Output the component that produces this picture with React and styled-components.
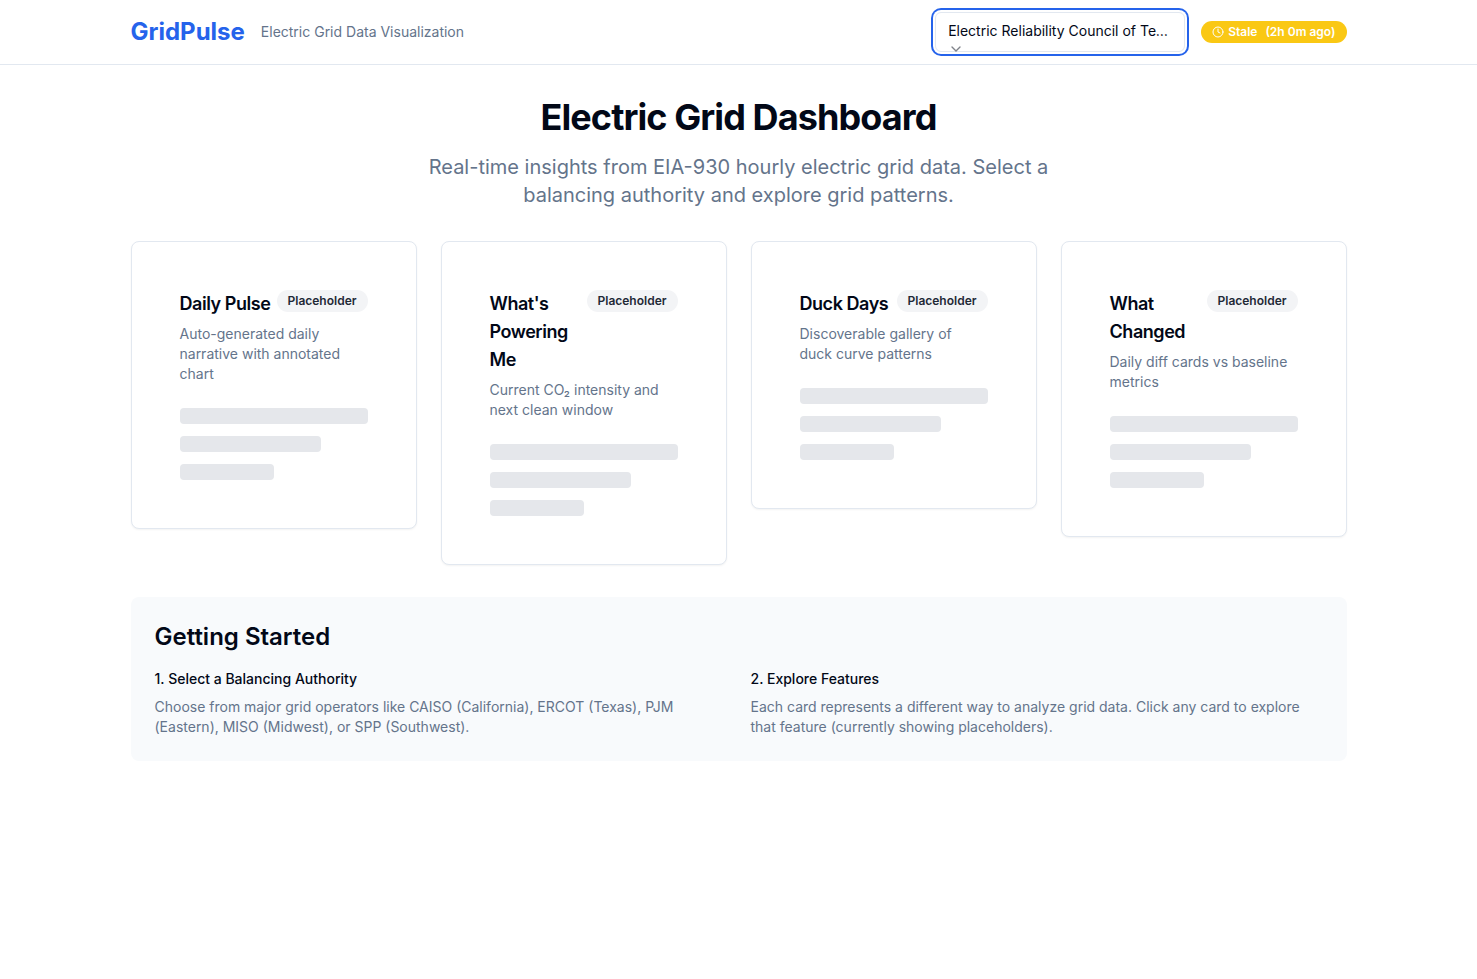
import React, { useState } from "react";
import styled, { createGlobalStyle } from "styled-components";
import { ChevronDown, Clock } from "lucide-react";

const GlobalStyle = createGlobalStyle`
  *, *::before, *::after { box-sizing: border-box; }
  body {
    margin: 0;
    background: #ffffff;
    color: #020817;
    font-family: Inter, "Liberation Sans", sans-serif;
    font-size: 14px;
    line-height: 20px;
  }
  h1, h2, h3, p { margin: 0; }
`;

const Container = styled.div`
  width: 100%;
  max-width: 1280px;
  margin: 0 auto;
  padding: 0 32px;
`;

const Header = styled.header`
  border-bottom: 1px solid #e2e8f0;
`;

const HeaderBar = styled(Container)`
  display: flex;
  align-items: center;
  justify-content: space-between;
  min-height: 64px;
`;

const HeaderGroup = styled.div`
  display: flex;
  align-items: center;
  gap: 16px;
`;

const Brand = styled.a`
  color: #2563eb;
  font-size: 24px;
  line-height: 32px;
  font-weight: 700;
  text-decoration: none;
`;

const Muted = styled.p`
  color: #64748b;
`;

const SelectWrap = styled.div`
  position: relative;
  display: flex;
`;

const Select = styled.select`
  appearance: none;
  width: 250px;
  height: 40px;
  padding: 0 12px 2px;
  border: 1px solid #e2e8f0;
  border-radius: 6px;
  outline: none;
  background: #ffffff;
  box-shadow: 0 0 0 2px #ffffff, 0 0 0 4px #2563eb;
  color: #020817;
  font: inherit;
  white-space: nowrap;
  overflow: hidden;
  text-overflow: ellipsis;
`;

const SelectChevron = styled(ChevronDown)`
  position: absolute;
  left: 13px;
  bottom: -5px;
  opacity: 0.5;
  pointer-events: none;
`;

const Pill = styled.span`
  display: inline-flex;
  flex-shrink: 0;
  align-items: center;
  gap: 4px;
  padding: 3px 11px;
  border-radius: 11px;
  background: ${(p) => (p.$tone === "warning" ? "#fac814" : "#f3f4f6")};
  color: ${(p) => (p.$tone === "warning" ? "#ffffff" : "#1f2937")};
  font-size: 12px;
  line-height: 16px;
  font-weight: 600;
`;

const Age = styled.span`
  margin-left: 4px;
`;

const Main = styled.main`
  padding: 32px 0;
`;

const Content = styled(Container)`
  display: flex;
  flex-direction: column;
  gap: 32px;
`;

const Intro = styled.section`
  display: flex;
  flex-direction: column;
  align-items: center;
  gap: 16px;
  text-align: center;
`;

const PageTitle = styled.h1`
  font-size: 36px;
  line-height: 40px;
  font-weight: 700;
  letter-spacing: -0.025em;
`;

const Lead = styled(Muted)`
  max-width: 672px;
  font-size: 20px;
  line-height: 28px;
`;

const CardGrid = styled.section`
  display: grid;
  grid-template-columns: repeat(4, minmax(0, 1fr));
  align-items: start;
  gap: 24px;

  @media (max-width: 1023px) {
    grid-template-columns: repeat(2, minmax(0, 1fr));
  }
`;

const Card = styled.article`
  padding: 48px;
  border: 1px solid #e2e8f0;
  border-radius: 8px;
  background: #ffffff;
  box-shadow: 0 1px 2px rgba(0, 0, 0, 0.05);
`;

const CardHead = styled.div`
  display: flex;
  align-items: flex-start;
  justify-content: space-between;
`;

const CardTitle = styled.h3`
  font-size: 18px;
  line-height: 28px;
  font-weight: 600;
  letter-spacing: -0.025em;
`;

const CardText = styled(Muted)`
  margin-top: 6px;
`;

const Skeleton = styled.div`
  display: flex;
  flex-direction: column;
  gap: 12px;
  margin-top: 24px;
`;

const SkeletonBar = styled.div`
  width: ${(p) => p.$width};
  height: 16px;
  border-radius: 4px;
  background: #e5e7eb;
`;

const Panel = styled.section`
  padding: 24px;
  border-radius: 8px;
  background: #f8fafc;
`;

const PanelTitle = styled.h2`
  margin-bottom: 16px;
  font-size: 24px;
  line-height: 32px;
  font-weight: 600;
`;

const Steps = styled.div`
  display: grid;
  grid-template-columns: repeat(2, minmax(0, 1fr));
  gap: 24px;
`;

const StepTitle = styled.h3`
  margin-bottom: 8px;
  font-size: 14px;
  line-height: 20px;
  font-weight: 500;
`;

const AUTHORITIES = [
  ["ERCO", "Electric Reliability Council of Texas, Inc."],
  ["CISO", "California Independent System Operator"],
  ["PJM", "PJM Interconnection, LLC"],
  ["MISO", "Midcontinent Independent System Operator, Inc."],
  ["SWPP", "Southwest Power Pool"],
];

const FEATURES = [
  ["Daily Pulse", "Auto-generated daily narrative with annotated chart"],
  ["What's Powering Me", "Current CO₂ intensity and next clean window"],
  ["Duck Days", "Discoverable gallery of duck curve patterns"],
  ["What Changed", "Daily diff cards vs baseline metrics"],
];

const STEPS = [
  [
    "1. Select a Balancing Authority",
    "Choose from major grid operators like CAISO (California), ERCOT (Texas), PJM (Eastern), MISO (Midwest), or SPP (Southwest).",
  ],
  [
    "2. Explore Features",
    "Each card represents a different way to analyze grid data. Click any card to explore that feature (currently showing placeholders).",
  ],
];

export default function App() {
  const [authority, setAuthority] = useState("ERCO");

  return (
    <>
      <GlobalStyle />
      <Header>
        <HeaderBar>
          <HeaderGroup>
            <Brand href="#">GridPulse</Brand>
            <Muted>Electric Grid Data Visualization</Muted>
          </HeaderGroup>
          <HeaderGroup>
            <SelectWrap>
              <Select
                aria-label="Balancing authority"
                value={authority}
                onChange={(e) => setAuthority(e.target.value)}
              >
                {AUTHORITIES.map(([code, name]) => (
                  <option key={code} value={code}>{name}</option>
                ))}
              </Select>
              <SelectChevron size={16} aria-hidden="true" />
            </SelectWrap>
            <Pill $tone="warning">
              <Clock size={12} aria-hidden="true" />
              <span>Stale</span>
              <Age>(2h 0m ago)</Age>
            </Pill>
          </HeaderGroup>
        </HeaderBar>
      </Header>
      <Main>
        <Content>
          <Intro>
            <PageTitle>Electric Grid Dashboard</PageTitle>
            <Lead>
              Real-time insights from EIA-930 hourly electric grid data. Select a
              balancing authority and explore grid patterns.
            </Lead>
          </Intro>
          <CardGrid>
            {FEATURES.map(([title, text]) => (
              <Card key={title}>
                <CardHead>
                  <CardTitle>{title}</CardTitle>
                  <Pill>Placeholder</Pill>
                </CardHead>
                <CardText>{text}</CardText>
                <Skeleton aria-hidden="true">
                  <SkeletonBar $width="100%" />
                  <SkeletonBar $width="75%" />
                  <SkeletonBar $width="50%" />
                </Skeleton>
              </Card>
            ))}
          </CardGrid>
          <Panel>
            <PanelTitle>Getting Started</PanelTitle>
            <Steps>
              {STEPS.map(([title, text]) => (
                <div key={title}>
                  <StepTitle>{title}</StepTitle>
                  <Muted>{text}</Muted>
                </div>
              ))}
            </Steps>
          </Panel>
        </Content>
      </Main>
    </>
  );
}
